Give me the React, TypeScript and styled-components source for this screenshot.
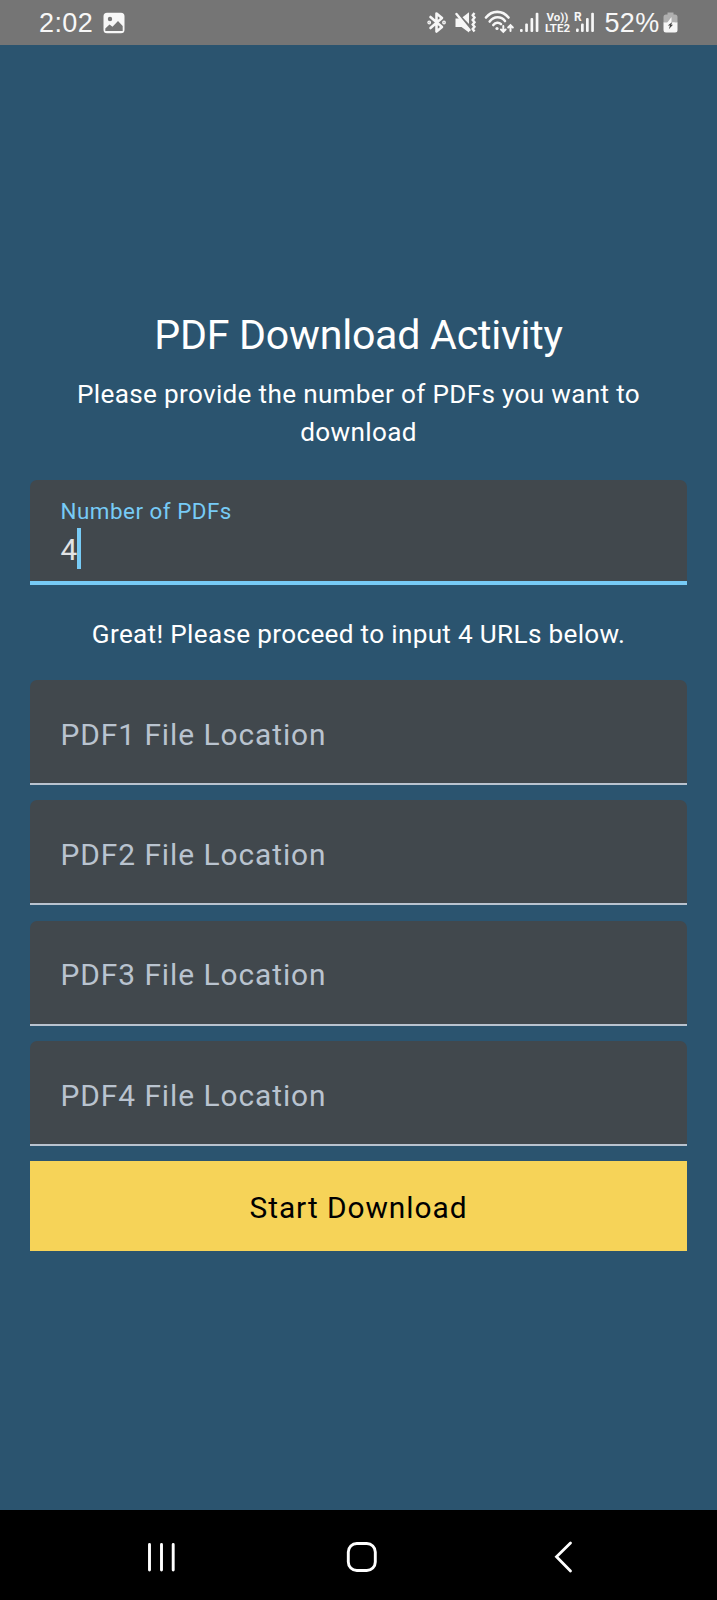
import React from "react";
import styled, { createGlobalStyle } from "styled-components";

const GlobalStyle = createGlobalStyle`
  * { box-sizing: border-box; }
  body { margin: 0; background: #2b546f; }
`;

const Screen = styled.div`
  display: flex;
  flex-direction: column;
  width: 717px;
  height: 1600px;
  background: #2b546f;
  font-family: Roboto, "Liberation Sans", sans-serif;
  overflow: hidden;
`;

const StatusBar = styled.header`
  display: flex;
  align-items: flex-start;
  justify-content: space-between;
  flex: none;
  height: 45px;
  padding: 0 39px;
  background: #757575;
  color: #f7f7f7;
`;

const StatusGroup = styled.div`
  display: flex;
  align-items: flex-start;
  height: 45px;
`;

const StatusText = styled.span<{ $width: number; $left?: number; $spacing?: number }>`
  width: ${(p) => p.$width}px;
  margin-left: ${(p) => p.$left ?? 0}px;
  font: 27px/47px "Liberation Sans", sans-serif;
  letter-spacing: ${(p) => p.$spacing ?? 0}px;
  white-space: nowrap;
`;

const Glyph = styled.svg<{ $left?: number }>`
  display: block;
  flex: none;
  margin-left: ${(p) => p.$left ?? 0}px;
`;

const VoLte = styled.div`
  display: flex;
  flex-direction: column;
  align-items: center;
  width: 29px;
  margin-left: 4px;
  padding-top: 12px;
  font: bold 11.5px/11px Roboto, sans-serif;
  white-space: nowrap;
`;

const Content = styled.main`
  display: flex;
  flex-direction: column;
  flex: 1;
  padding: 264px 30px 0;
`;

const Title = styled.h1`
  margin: 0;
  color: #fff;
  font-size: 41.1px;
  font-weight: 400;
  line-height: 52px;
  letter-spacing: -0.24px;
  text-align: center;
`;

const Message = styled.p<{ $top: number; $bottom: number }>`
  margin: ${(p) => p.$top}px 0 ${(p) => p.$bottom}px;
  color: #fff;
  font-size: 26.13px;
  line-height: 37.5px;
  letter-spacing: 0.32px;
  text-align: center;
`;

const FieldList = styled.div`
  display: flex;
  flex-direction: column;
  gap: 15.3px;
  margin-bottom: 15.3px;
`;

const Field = styled.div<{ $active?: boolean }>`
  display: flex;
  flex-direction: column;
  justify-content: ${(p) => (p.$active ? "flex-start" : "center")};
  height: ${(p) => (p.$active ? 105.4 : 105)}px;
  padding: ${(p) => (p.$active ? "17px 30.5px 0" : "6px 30.5px 0")};
  border-bottom: ${(p) => (p.$active ? "4px solid #77cbf6" : "2px solid #b9c3cf")};
  border-radius: 7px 7px 0 0;
  background: #41484d;
`;

const FieldLabel = styled.span`
  color: #77cbf6;
  font-size: 22.4px;
  line-height: 29px;
  letter-spacing: 0.5px;
`;

const FieldValue = styled.span`
  display: flex;
  align-items: center;
  height: 41px;
  margin-top: 2px;
  color: #e1e3e5;
  font-size: 29.87px;
  line-height: 43px;
`;

const FieldDigits = styled.span`
  padding-top: 2px;
`;

const Caret = styled.span`
  width: 4px;
  height: 41px;
  background: #77cbf6;
`;

const Placeholder = styled.span`
  color: #b9c3cf;
  font-size: 29.87px;
  line-height: 44px;
  letter-spacing: 0.95px;
`;

const StartButton = styled.button`
  height: 89.6px;
  padding: 4px 0 0;
  border: 0;
  background: #f6d358;
  color: #000;
  font: 29.87px/44px Roboto, sans-serif;
  letter-spacing: 0.95px;
`;

const NavBar = styled.nav`
  display: flex;
  align-items: center;
  flex: none;
  height: 90px;
  padding: 3px 0 0 146px;
  background: #000;
`;

const files = [1, 2, 3, 4];

export default function App() {
  return (
    <>
      <GlobalStyle />
      <Screen>
        <StatusBar>
          <StatusGroup>
            <StatusText $width={64} $spacing={0.4}>2:02</StatusText>
            <Glyph width="22" height="45" viewBox="0 0 22 45">
              <path
                fillRule="evenodd"
                fill="#f7f7f7"
                d="M4 12.7h14a3.5 3.5 0 0 1 3.5 3.5v13.6a3.5 3.5 0 0 1-3.5 3.5H4a3.5 3.5 0 0 1-3.5-3.5V16.2A3.5 3.5 0 0 1 4 12.7ZM7 16.8a2.2 2.2 0 1 0 0 4.400a2.200 2.200 0 1 0 0-4.400ZM2.300 28.500V31H19.700V26L15 21L9.500 26.700L6.500 24.500Z"
              />
            </Glyph>
          </StatusGroup>
          <StatusGroup>
            <Glyph width="20" height="45" viewBox="0 0 20 45" fill="none" stroke="#f7f7f7" strokeWidth="2.600" strokeLinejoin="round" strokeLinecap="round">
              <path d="M3.500 17L15 27L9.500 31.500V13.500L15 18L3.500 28" />
              <circle cx="2.200" cy="22.500" r="0.600" fill="#f7f7f7" />
              <circle cx="17" cy="22.500" r="0.600" fill="#f7f7f7" />
            </Glyph>
            <Glyph $left={8} width="22" height="45" viewBox="0 0 22 45" fill="#f7f7f7" stroke="none">
              <path d="M7.500 17.200L14 12.300V24Z" />
              <path d="M0.500 18.500H5L14 29V32.500L6.500 27H0.500Z" />
              <path d="M1.500 14L14.500 30" stroke="#f7f7f7" strokeWidth="2.400" strokeLinecap="round" />
              <path d="M19.500 13l-1.800 2.300l1.800 2.300l-1.800 2.300l1.800 2.300l-1.800 2.300l1.800 2.300l-1.800 2.300l1.800 2.300" fill="none" stroke="#f7f7f7" strokeWidth="2.400" />
            </Glyph>
            <Glyph $left={7} width="31" height="45" viewBox="0 0 31 45" fill="none" stroke="#f7f7f7" strokeWidth="2.600" strokeLinecap="round">
              <path d="M2 17.500C8 10 18.500 10 24.500 17.500" />
              <path d="M5.700 21.500C10 16 17 16 21 21" />
              <path d="M9.300 25C11.500 22.200 15 22.200 17 24.200" />
              <circle cx="13" cy="28.500" r="1.600" fill="#f7f7f7" stroke="none" />
              <path d="M19.300 26V31.500M17 29.500l2.300 2.300l2.300-2.300M26.500 31V25.500M24.200 27.500l2.300-2.300l2.300 2.300" strokeWidth="2" />
            </Glyph>
            <Glyph $left={5} width="19" height="45" viewBox="0 0 19 45" fill="#f7f7f7">
              <rect x="0" y="29" width="2.700" height="3" rx="1" />
              <rect x="5.200" y="23.500" width="2.700" height="8.500" rx="1" />
              <rect x="10.500" y="18" width="2.700" height="14" rx="1" />
              <rect x="15.700" y="12.800" width="2.700" height="19.200" rx="1" />
            </Glyph>
            <VoLte>
              <div>Vo))</div>
              <div>LTE2</div>
            </VoLte>
            <Glyph $left={2} width="21" height="45" viewBox="0 0 21 45" fill="#f7f7f7">
              <text x="0" y="21" fontFamily="Roboto" fontWeight="700" fontSize="12">R</text>
              <rect x="2" y="28.500" width="2.700" height="3.500" rx="1" />
              <rect x="7" y="23.500" width="2.700" height="8.500" rx="1" />
              <rect x="12" y="18" width="2.700" height="14" rx="1" />
              <rect x="17.200" y="12.800" width="2.700" height="19.200" rx="1" />
            </Glyph>
            <StatusText $left={9.5} $width={58.5} $spacing={0.3}>52%</StatusText>
            <Glyph width="15" height="45" viewBox="0 0 15 45">
              <path d="M4.500 12.500h6v2h1.500a2.500 2.500 0 0 1 2.500 2.500V23H0.500V17A2.500 2.500 0 0 1 3 14.500h1.500Z" fill="#b0b0b0" />
              <path d="M0.500 22.500H14.500V30a2.500 2.500 0 0 1-2.500 2.500H3A2.500 2.500 0 0 1 .5 30Z" fill="#f7f7f7" />
              <path d="M8.500 17L2.500 25H6.500L6 30L12 22.500H8.500Z" fill="#f7f7f7" />
              <path d="M9.300 22L4.800 25.500H7L5.800 29.200L10 24.800H8.200Z" fill="#444" />
            </Glyph>
          </StatusGroup>
        </StatusBar>

        <Content>
          <Title>PDF Download Activity</Title>
          <Message $top={15} $bottom={29}>
            Please provide the number of PDFs you want to download
          </Message>
          <Field $active>
            <FieldLabel>Number of PDFs</FieldLabel>
            <FieldValue>
              <FieldDigits>4</FieldDigits>
              <Caret />
            </FieldValue>
          </Field>
          <Message $top={30.9} $bottom={26.4}>
            Great! Please proceed to input 4 URLs below.
          </Message>
          <FieldList>
            {files.map((n) => (
              <Field key={n}>
                <Placeholder>PDF{n} File Location</Placeholder>
              </Field>
            ))}
          </FieldList>
          <StartButton>Start Download</StartButton>
        </Content>

        <NavBar>
          <Glyph width="32" height="32" viewBox="0 0 32 32" stroke="#fff" strokeWidth="2.900" strokeLinecap="round">
            <path d="M3.500 3.500V29M15.500 3.500V29M27.200 3.500V29" />
          </Glyph>
          <Glyph $left={168} width="32" height="32" viewBox="0 0 32 32" fill="none" stroke="#fff" strokeWidth="2.900">
            <rect x="2.300" y="2.500" width="27" height="27" rx="8.500" />
          </Glyph>
          <Glyph $left={175} width="20" height="32" viewBox="0 0 20 32" fill="none" stroke="#fff" strokeWidth="2.800" strokeLinecap="round">
            <path d="M17.500 2L3.500 15.800L17.500 30" />
          </Glyph>
        </NavBar>
      </Screen>
    </>
  );
}
